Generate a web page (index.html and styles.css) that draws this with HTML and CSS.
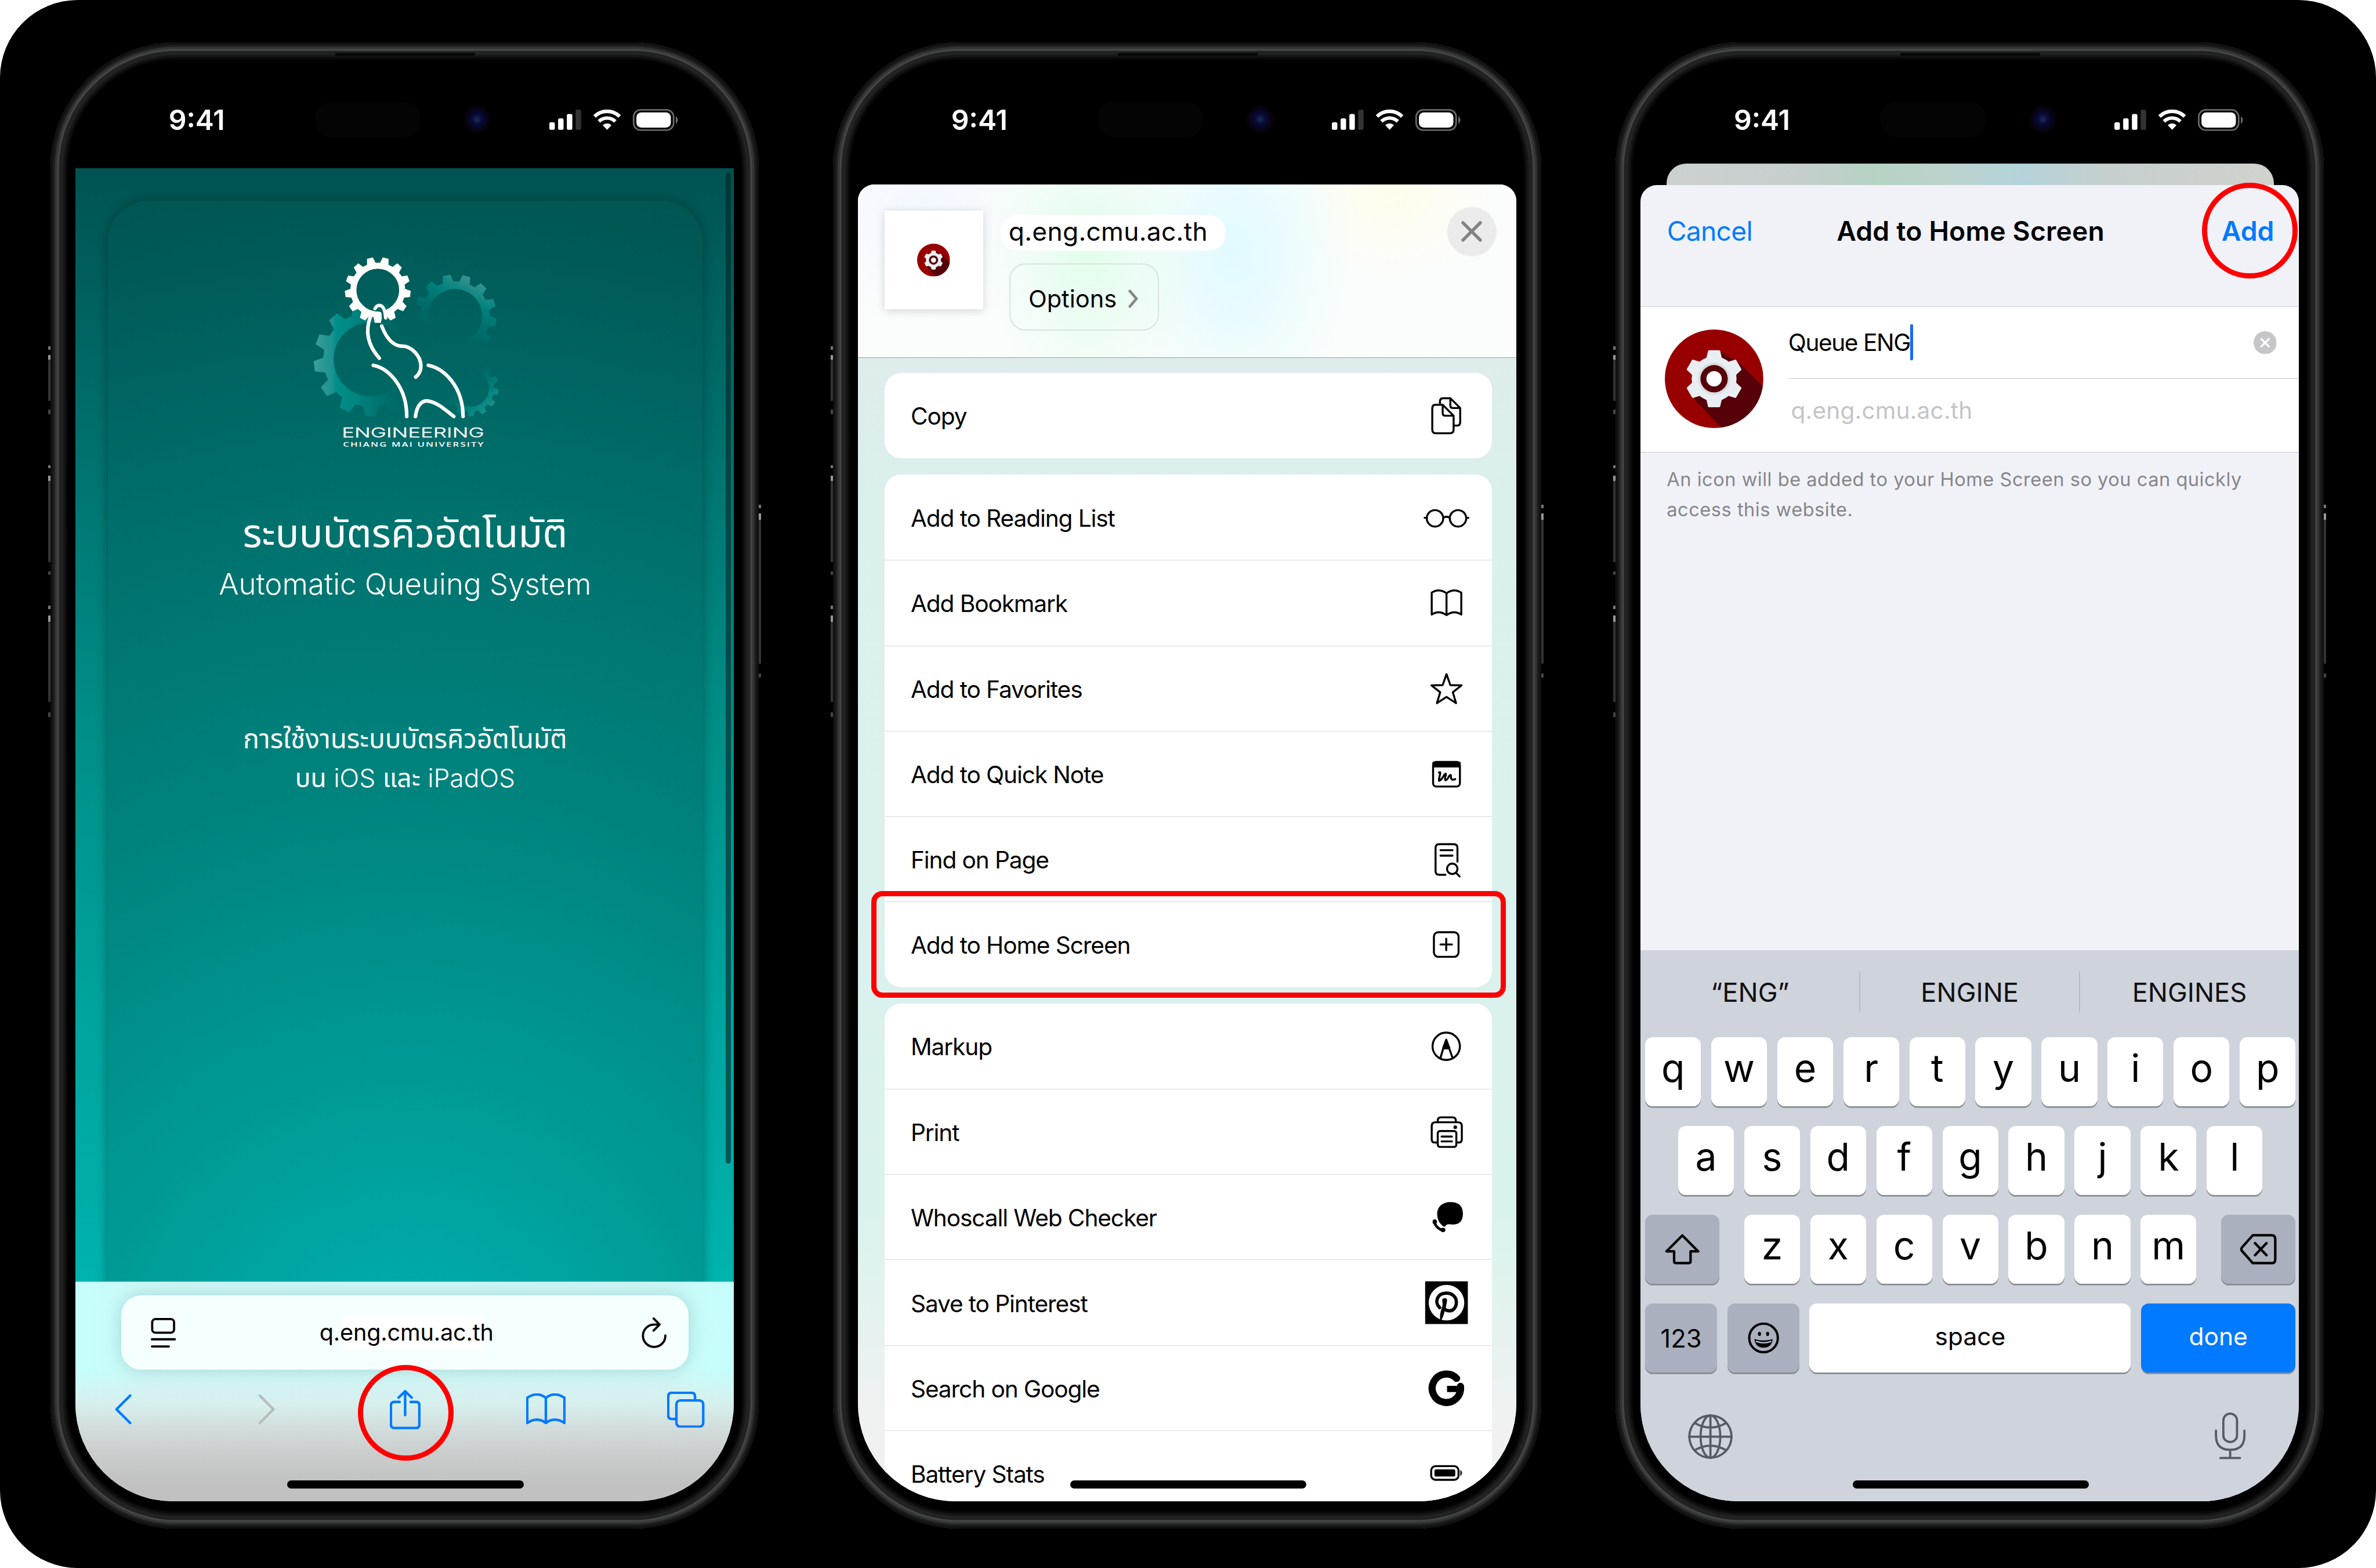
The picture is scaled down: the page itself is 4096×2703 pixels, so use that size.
FILE: index.html
```html
<!DOCTYPE html>
<html lang="th">
<head>
<meta charset="utf-8">
<title>Add to Home Screen on iOS</title>
<link rel="stylesheet" href="styles.css">
</head>
<body>
<svg class="defs" aria-hidden="true">
  <defs>
    <polygon id="tooth" points="-8.5,47 -5.5,60 5.5,60 8.5,47"/>
    <g id="gear">
      <circle r="44.5" fill="none" stroke="#fff" stroke-width="11"/>
      <g fill="#fff">
        <use href="#tooth"/>
        <use href="#tooth" transform="rotate(27.69)"/>
        <use href="#tooth" transform="rotate(55.38)"/>
        <use href="#tooth" transform="rotate(83.08)"/>
        <use href="#tooth" transform="rotate(110.77)"/>
        <use href="#tooth" transform="rotate(138.46)"/>
        <use href="#tooth" transform="rotate(166.15)"/>
        <use href="#tooth" transform="rotate(193.85)"/>
        <use href="#tooth" transform="rotate(221.54)"/>
        <use href="#tooth" transform="rotate(249.23)"/>
        <use href="#tooth" transform="rotate(276.92)"/>
        <use href="#tooth" transform="rotate(304.62)"/>
        <use href="#tooth" transform="rotate(332.31)"/>
      </g>
    </g>
    <symbol id="status-icons" viewBox="0 0 236 40">
      <g fill="#fff">
        <rect x="0" y="24" width="10" height="14" rx="3"/>
        <rect x="16" y="17" width="10" height="21" rx="3"/>
        <rect x="32" y="9" width="10" height="29" rx="3"/>
        <rect x="48" y="1" width="10" height="37" rx="3" fill="#333"/>
        <path d="M105.500 38 l-8 -8.500 a11.500 11.500 0 0 1 16 0z"/>
        <rect x="159" y="6" width="63" height="28" rx="9"/>
      </g>
      <g fill="none" stroke="#fff" stroke-width="6.500">
        <path d="M82.500 13.500a33 33 0 0 1 46 0"/>
        <path d="M90.500 22.500a21.500 21.500 0 0 1 30 0"/>
      </g>
      <rect x="154" y="1.500" width="73" height="37" rx="13" fill="none" stroke="#6a6a6a" stroke-width="3"/>
      <path d="M231 13.500c5 2.500 5 10.500 0 13z" fill="#6a6a6a"/>
    </symbol>
    <symbol id="emblem" viewBox="0 0 180 180">
      <clipPath id="disc"><circle cx="90" cy="90" r="90"/></clipPath>
      <g clip-path="url(#disc)">
        <rect width="180" height="180" fill="#980000"/>
        <path d="M102 40L139 64L182 107V182H106L53 127Z" fill="#560009"/>
      </g>
      <g fill="#e9eef2">
        <circle cx="90" cy="90" r="41"/>
        <g id="spokes">
          <path id="spoke" d="M75 56L79 39Q79.500 38 81 38H99Q100.500 38 101 39L105 56Z"/>
          <use href="#spoke" transform="rotate(60 90 90)"/>
          <use href="#spoke" transform="rotate(120 90 90)"/>
          <use href="#spoke" transform="rotate(180 90 90)"/>
          <use href="#spoke" transform="rotate(240 90 90)"/>
          <use href="#spoke" transform="rotate(300 90 90)"/>
        </g>
      </g>
      <circle cx="90" cy="90" r="29.500" fill="#d9dee1"/>
      <circle cx="90" cy="90" r="25" fill="#560009"/>
      <circle cx="90" cy="90" r="14" fill="#fff"/>
    </symbol>
  </defs>
</svg>

<main class="board">
  <!-- Step 1: open the share menu -->
  <section class="phone">
    <i class="earpiece"></i><i class="island"></i><i class="camera"></i>
    <div class="screen">
      <header class="status"><span class="time">9:41</span><svg class="status-icons"><use href="#status-icons"/></svg></header>
      <div class="page">
        <div class="page-card">
          <svg class="logo" viewBox="0 0 400 400">
            <defs>
              <linearGradient id="fade1" gradientUnits="userSpaceOnUse" x1="33" y1="0" x2="200" y2="0"><stop offset="0" stop-color="#3a9e9b"/><stop offset=".2" stop-color="#1c9390"/><stop offset=".24" stop-color="#008f8b"/><stop offset=".45" stop-color="#008a86" stop-opacity=".9"/><stop offset=".95" stop-color="#007a76" stop-opacity="0"/></linearGradient>
              <linearGradient id="fade2" gradientUnits="userSpaceOnUse" x1="325" y1="68" x2="265" y2="190"><stop offset="0" stop-color="#3a9490"/><stop offset=".3" stop-color="#00827e"/><stop offset=".9" stop-color="#006f6b" stop-opacity="0"/></linearGradient>
              <linearGradient id="fade3" gradientUnits="userSpaceOnUse" x1="362" y1="305" x2="305" y2="240"><stop offset="0" stop-color="#1d9490"/><stop offset=".3" stop-color="#04837f"/><stop offset=".9" stop-color="#00706c" stop-opacity="0"/></linearGradient>
              <mask id="m1"><use href="#gear" transform="translate(136.700 216.700) scale(1.730)"/></mask>
              <mask id="m2"><use href="#gear" transform="translate(291 137.300) scale(1.260) rotate(2)"/></mask>
              <mask id="m3"><use href="#gear" transform="translate(320 270) scale(.840)"/></mask>
            </defs>
            <rect width="400" height="400" fill="url(#fade1)" mask="url(#m1)"/>
            <rect width="400" height="400" fill="url(#fade2)" mask="url(#m2)"/>
            <rect width="400" height="400" fill="url(#fade3)" mask="url(#m3)"/>
            <use href="#gear" transform="translate(149.700 90)"/>
            <g fill="none" stroke-linecap="round">
              <path d="M143 126C149 128 157 125 159 132C160 137 158 141 161 147" stroke="#006360" stroke-width="5"/>
              <path d="M144.500 124C149 116 156 116 160.500 124C163.500 130 163 134 164 141" stroke="#fff" stroke-width="6"/>
              <g stroke="#fff" stroke-width="6.500">
                <path d="M136.500 138C128 160 128 187 152.500 214.500"/>
                <path d="M157 156C165 177 177 191 192 192.500C212 191 228.500 212 228.500 229C228.500 238 224 245 219 249"/>
                <path d="M141.500 227.500C170 233 203 268 202.500 321"/>
                <path d="M242 227.500C270 233 305 265 305.500 321"/>
                <path d="M218.500 321C221 300 231 289.500 245 293.500C260 297 272 308 288.500 321"/>
              </g>
            </g>
            <text class="logo-name" x="84" y="359.500" textLength="260" lengthAdjust="spacingAndGlyphs">ENGINEERING</text>
            <text class="logo-sub" x="86" y="376" textLength="259" lengthAdjust="spacingAndGlyphs">CHIANG MAI UNIVERSITY</text>
          </svg>
          <h1 class="title-th">ระบบบัตรคิวอัตโนมัติ</h1>
          <p class="title-en">Automatic Queuing System</p>
          <p class="howto-th">การใช้งานระบบบัตรคิวอัตโนมัติ</p>
          <p class="howto-os"><span>บน</span> iOS <span>และ</span> iPadOS</p>
        </div>
        <i class="scrollbar"></i>
      </div>
      <footer class="safari">
        <div class="urlbar">
          <svg class="i45" viewBox="0 0 46 56" fill="none" stroke="#000" stroke-width="4"><rect x="2.500" y="3" width="40" height="25" rx="6"/><path d="M2 40H44M2 53H33" stroke-linecap="round"/></svg>
          <span class="url">q.eng.cmu.ac.th</span>
          <svg class="i45" viewBox="0 0 46 56" fill="none" stroke="#000" stroke-width="4" stroke-linecap="round" stroke-linejoin="round"><path d="M22 2L33 13L22 24M33 13H22A20.500 20.500 0 1 0 43.500 33"/></svg>
        </div>
        <nav class="toolbar">
          <svg class="t-back" viewBox="0 0 32 56"><path d="M29 3L4 28L29 53"/></svg>
          <svg class="t-fwd" viewBox="0 0 32 56"><path d="M3 3L28 28L3 53"/></svg>
          <svg class="t-share" viewBox="0 0 56 72"><path d="M18 22H8Q2 22 2 28V63Q2 69.500 8 69.500H48Q54 69.500 54 63V28Q54 22 48 22H38M28 46V3M16 14L28 2.500L40 14"/></svg>
          <svg class="t-book" viewBox="0 0 72 58"><path d="M36 8Q20 -4 2 8V54Q20 42 36 54Q52 42 70 54V8Q52 -4 36 8ZM36 8V54"/></svg>
          <svg class="t-tabs" viewBox="0 0 68 66"><rect x="17" y="16" width="49" height="48" rx="7"/><path d="M17 50H9Q2 50 2 43V9Q2 2 9 2H44Q51 2 51 9V16"/></svg>
        </nav>
      </footer>
    </div>
    <i class="ring ring-share"></i><i class="home"></i>
  </section>

  <!-- Step 2: choose Add to Home Screen -->
  <section class="phone">
    <i class="earpiece"></i><i class="island"></i><i class="camera"></i>
    <div class="screen">
      <header class="status"><span class="time">9:41</span><svg class="status-icons"><use href="#status-icons"/></svg></header>
      <div class="share">
        <div class="share-head">
          <div class="thumb"><svg viewBox="0 0 180 180"><use href="#emblem"/></svg></div>
          <div class="share-info">
            <span class="share-url">q.eng.cmu.ac.th</span>
            <span class="options">Options<svg viewBox="0 0 20 34"><path d="M4 3L16 17L4 31"/></svg></span>
          </div>
          <span class="close"><svg viewBox="0 0 36 36"><path d="M3 3L33 33M33 3L3 33"/></svg></span>
        </div>
        <div class="share-list">
          <ul class="card">
            <li>Copy<svg viewBox="0 0 84 84"><path d="M30 19V16Q30 10 36 10H49L67 28V54Q67 60 61 60H56M49 11V23Q49 28 54 28H66"/><path d="M16 29Q16 22 22 22H35L55 42V67Q55 74 49 74H22Q16 74 16 67ZM35 23V37Q35 42 40 42H54"/></svg></li>
          </ul>
          <ul class="card">
            <li>Add to Reading List<svg viewBox="0 0 84 84"><circle cx="21" cy="43" r="15"/><circle cx="63" cy="43" r="15"/><path d="M36 42Q42 38 48 42M2 42H6M78 42H82"/></svg></li>
            <li>Add Bookmark<svg viewBox="0 0 84 84"><path d="M42 24Q28 14 15 23V63Q28 54 42 64Q56 54 69 63V23Q56 14 42 24ZM42 24V64"/></svg></li>
            <li>Add to Favorites<svg viewBox="0 0 84 84"><path d="M42 15L49 35L69.500 35.500L53.500 48L59.500 68L42 56.500L24.500 68L30.500 48L14.500 35.500L35 35Z"/></svg></li>
            <li>Add to Quick Note<svg viewBox="0 0 84 84"><rect x="17.500" y="19.500" width="49" height="45" rx="6"/><path d="M18 21H66V28H18Z" fill="#000"/><path d="M28 39Q32 37 30 43Q27 55 29 54Q33 52 38 43Q41 39 41 43Q38 52 40 53Q43 53 47 45Q51 41 50 48Q51 54 58 51"/></svg></li>
            <li>Find on Page<svg viewBox="0 0 84 84"><path d="M40 70H29Q22 70 22 63V21Q22 14 29 14H55Q62 14 62 21V46M31 25H53M31 35H53"/><circle cx="52.500" cy="59" r="9.500"/><path d="M59 66L66 73"/></svg></li>
            <li>Add to Home Screen<svg viewBox="0 0 84 84"><rect x="19" y="19" width="45" height="45" rx="8"/><path d="M41.500 31V52M31 41.500H52"/></svg></li>
          </ul>
          <ul class="card">
            <li>Markup<svg viewBox="0 0 84 84"><circle cx="41.500" cy="42" r="25"/><path d="M31 63L36 46L41.500 31L47 46L53 63M36 46H47"/><path d="M41.500 30L47 45H36Z" fill="#000"/></svg></li>
            <li>Print<svg viewBox="0 0 84 84"><path d="M26 24V21Q26 15 32 15H53Q59 15 59 21V24"/><path d="M25 61H21Q15 61 15 55V31Q15 24 22 24H63Q70 24 70 31V55Q70 61 64 61H60"/><rect x="26" y="40" width="34" height="29" rx="4"/><path d="M33 50H52M33 59H52"/><circle cx="58" cy="33" r="1.500" fill="#000"/></svg></li>
            <li>Whoscall Web Checker<svg viewBox="19 2 84 84" class="solid"><path d="M68 16C84 16 91 24 91 37C91 51 84 57 73 57C68 57 65 56 62 57C59 58 60 61 57 61C50 58 44 49 44 38C44 24 54 16 68 16Z"/><path d="M39 53C41 60 47 66 54 67.500" fill="none" stroke="#000" stroke-width="5"/><ellipse cx="39.500" cy="52" rx="4" ry="4.500"/><ellipse cx="54.500" cy="67" rx="4.500" ry="4"/></svg></li>
            <li>Save to Pinterest<svg viewBox="-3 -3 84 84" class="solid"><rect width="78" height="78"/><circle cx="39" cy="39" r="32.500" fill="#fff"/><path d="M26.500 48C16 38 22 21.500 39 21.500C50 21.500 57 29 57 38C57 48 51 54 44 54C40 54 38 53 35 50" fill="none" stroke="#000" stroke-width="6"/><path d="M31 35C31 29.500 41 29 40 35.500C39 42 37 52 35 57C34 62 32 66 30 70L27.500 70C26.500 62 28 56 30 50C32 44 32.500 42 31 35Z"/></svg></li>
            <li>Search on Google<svg viewBox="-10 -10 84 84" class="solid"><path d="M50.500 13.500A26 26 0 1 0 57.500 28" fill="none" stroke="#000" stroke-width="13"/><path d="M33 27H64V32L58 38.500H33Z"/></svg></li>
            <li>Battery Stats<svg viewBox="0 0 84 84"><rect x="14" y="28" width="50" height="25" rx="8"/><rect x="20" y="34" width="38" height="13" rx="3" fill="#000" stroke="none"/><path d="M68 36Q72 40 68 45Z" fill="#000" stroke-width="1"/></svg></li>
          </ul>
        </div>
      </div>
    </div>
    <i class="highlight"></i><i class="home"></i>
  </section>

  <!-- Step 3: confirm with Add -->
  <section class="phone">
    <i class="earpiece"></i><i class="island"></i><i class="camera"></i>
    <div class="screen">
      <header class="status"><span class="time">9:41</span><svg class="status-icons"><use href="#status-icons"/></svg></header>
      <div class="behind"></div>
      <div class="add">
        <div class="add-head"><span class="cancel">Cancel</span><b>Add to Home Screen</b><span class="confirm">Add</span></div>
        <div class="form">
          <svg class="app-icon" viewBox="0 0 180 180"><use href="#emblem"/></svg>
          <div class="fields">
            <div class="field name"><span>Queue ENG</span><i class="caret"></i><svg viewBox="0 0 42 42"><circle cx="21" cy="21" r="21" fill="#c6c6c8"/><path d="M14 14L28 28M28 14L14 28" stroke="#fff" stroke-width="3.500" stroke-linecap="round"/></svg></div>
            <div class="field link">q.eng.cmu.ac.th</div>
          </div>
        </div>
        <p class="hint">An icon will be added to your Home Screen so you can quickly<br>access this website.</p>
        <div class="keyboard">
          <div class="suggest"><span>“ENG”</span><span>ENGINE</span><span>ENGINES</span></div>
          <div class="keys"><kbd>q</kbd><kbd>w</kbd><kbd>e</kbd><kbd>r</kbd><kbd>t</kbd><kbd>y</kbd><kbd>u</kbd><kbd>i</kbd><kbd>o</kbd><kbd>p</kbd></div>
          <div class="keys"><kbd>a</kbd><kbd>s</kbd><kbd>d</kbd><kbd>f</kbd><kbd>g</kbd><kbd>h</kbd><kbd>j</kbd><kbd>k</kbd><kbd>l</kbd></div>
          <div class="keys spread">
            <kbd class="fn shift"><svg viewBox="0 0 64 56"><path d="M32 3L61 32H47V50Q47 53.500 43 53.500H21Q17 53.500 17 50V32H3Z"/></svg></kbd>
            <div class="keys"><kbd>z</kbd><kbd>x</kbd><kbd>c</kbd><kbd>v</kbd><kbd>b</kbd><kbd>n</kbd><kbd>m</kbd></div>
            <kbd class="fn shift"><svg viewBox="0 0 68 56"><path d="M24 2.500H58Q65 2.500 65 9.500V46.500Q65 53.500 58 53.500H24L4 31Q2 28 4 25ZM28 17L49 39M49 17L28 39"/></svg></kbd>
          </div>
          <div class="keys bottom">
            <kbd class="fn mode">123</kbd>
            <kbd class="fn mode"><svg viewBox="0 0 64 60"><circle cx="32" cy="30" r="28"/><ellipse cx="24" cy="22" rx="3" ry="4" fill="#000" stroke="none"/><ellipse cx="40" cy="22" rx="3" ry="4" fill="#000" stroke="none"/><path d="M14 32Q32 38 50 32Q48 49 32 49Q16 49 14 32Z" fill="#000" stroke="none"/><path d="M18 37Q32 42 46 37" stroke="#aab0be" stroke-width="3"/></svg></kbd>
            <kbd class="space">space</kbd>
            <kbd class="done">done</kbd>
          </div>
          <div class="dock">
            <svg viewBox="0 0 84 88"><circle cx="42" cy="44" r="38.500"/><ellipse cx="42" cy="44" rx="18" ry="38.500"/><path d="M42 5V83M3 44H81M13 19Q42 36 71 19M13 69Q42 52 71 69"/></svg>
            <svg viewBox="0 0 84 88"><rect x="29.500" y="2" width="25" height="52" rx="12.500"/><path d="M16 33V42Q16 68 42 68Q68 68 68 42V33M42 68V83M24 83H60"/></svg>
          </div>
        </div>
      </div>
    </div>
    <i class="ring ring-add"></i><i class="home"></i>
  </section>
</main>
</body>
</html>
```
FILE: styles.css
```css
/* 1rem = 100 design units; the design is 4340 units wide */
html { font-size: 94.3779px; }
* { box-sizing: border-box; margin: 0; padding: 0; }
body { background: #fff; font-family: Inter, "Noto Sans Thai", "Noto Sans", sans-serif; color: #000; }
ul { list-style: none; }
svg { display: block; flex: none; }
.defs { position: absolute; width: 0; height: 0; }

.board { display: flex; gap: 1.345rem; width: 43.4rem; height: 28.64rem; padding: .77rem 0 0 .92rem; background: #000; border-radius: 1.42rem; overflow: hidden; }

/* device */
.phone { position: relative; flex: none; width: 12.94rem; margin-right: .01rem; height: 27.15rem; padding: .5rem .46rem; border-radius: 2.3rem; background: #000;
  box-shadow: inset 0 0 0 .04rem #111, inset 0 0 0 .08rem #1d1d1d, inset 0 0 0 .12rem #333534, inset 0 0 0 .155rem #434645, inset 0 0 0 .23rem #222, inset 0 0 0 .27rem #161616, inset 0 0 0 .31rem #0a0a0a; }
.phone::before, .phone::after { content: ""; position: absolute; width: .04rem; }
.phone::before { left: -.04rem; top: 5.56rem; height: 6.8rem;
  background: linear-gradient(#777 .06rem, #000 .06rem .16rem, #999 .16rem .24rem, #333 .24rem 1rem, #000 1rem 1.16rem, #444 1.16rem 1.24rem, #000 1.24rem 2.17rem, #777 2.17rem 2.23rem, #000 2.23rem 2.36rem, #999 2.36rem 2.46rem, #333 2.46rem 3.94rem, #000 3.94rem 4.11rem, #444 4.11rem 4.18rem, #000 4.18rem 4.74rem, #777 4.74rem 4.8rem, #000 4.8rem 4.92rem, #999 4.92rem 5.03rem, #333 5.03rem 6.5rem, #000 6.5rem 6.69rem, #444 6.69rem 6.77rem, #000 6.77rem); }
.phone::after { right: -.04rem; top: 8.45rem; height: 3.2rem;
  background: linear-gradient(#777 .06rem, #000 .06rem .16rem, #999 .16rem .28rem, #333 .28rem 2.9rem, #000 2.9rem 3.08rem, #444 3.08rem 3.16rem, #000 3.16rem); }
.screen { display: flex; flex-direction: column; height: 26.15rem; border-radius: 1.78rem; overflow: hidden; background: #000; }
.earpiece { position: absolute; left: 5.2rem; top: .19rem; width: 2.56rem; height: .07rem; border-radius: 0 0 .04rem .04rem; background: #080808; }
.island { position: absolute; z-index: 1; left: 4.83rem; top: 1.08rem; width: 1.93rem; height: .66rem; border-radius: .3rem; background: #040404; }
.camera { position: absolute; z-index: 1; left: 7.53rem; top: 1.14rem; width: .54rem; height: .54rem; border-radius: 50%; background: radial-gradient(#102a4a 6%, #0b0b3c 22%, #05051c 45%, #070208 60%, #000 72%); }
.home { position: absolute; left: 4.33rem; top: 26.27rem; width: 4.32rem; height: .15rem; border-radius: .08rem; background: #000; }
.status { flex: none; height: 1.8rem; padding: .04rem 1.01rem 0 1.7rem; display: flex; align-items: center; justify-content: space-between; color: #fff; }
.time { font-size: .51rem; font-weight: 600; }
.status-icons { width: 2.36rem; height: .4rem; }

/* annotations */
.ring { position: absolute; width: 1.75rem; height: 1.75rem; border: .1rem solid #f00; border-radius: 50%; }
.ring-share { left: 5.62rem; top: 24.16rem; }
.ring-add { left: 10.71rem; top: 2.57rem; }
.highlight { position: absolute; left: .7rem; top: 15.51rem; width: 11.59rem; height: 1.95rem; border: .1rem solid #f00; border-radius: .2rem; }

/* step 1: web page */
.page { position: relative; flex: none; height: 20.34rem; padding: .6rem .57rem 0 .59rem; overflow: hidden; background: linear-gradient(#005351, #006461 14%, #007672 29%, #008f88 51%, #00a39d 75%, #00b3ad); }
.page-card { height: 21.5rem; border-radius: .75rem; display: flex; flex-direction: column; align-items: center; color: #fff; box-shadow: 0 0 .2rem rgba(0,30,30,.45);
  background: radial-gradient(circle 23rem at 50% 21.84rem, #00aeab 4%, #00a9a6 10.4%, #009f9b 20.6%, #009591 30.7%, #00847e 47.6%, #00706c 71.8%, #005754 95%, #005451); }
.logo { width: 4rem; height: 4rem; margin-top: .73rem; }
.logo-name { font: 300 24.500px Inter, sans-serif; fill: #fff; stroke: #fff; stroke-width: .4px; }
.logo-sub { font: 600 10.500px "Open Sans", sans-serif; letter-spacing: 1.300px; fill: #fff; }
.title-th { margin-top: .82rem; font-size: .72rem; font-weight: 400; line-height: 1.02rem; }
.title-en { margin-top: .08rem; font-size: .54rem; font-weight: 300; line-height: .7rem; }
.howto-th { margin-top: 2.12rem; font-size: .488rem; line-height: .7rem; }
.howto-os { margin-top: .02rem; font-size: .47rem; font-weight: 300; line-height: .7rem; }
.howto-os span { font-weight: 400; }
.scrollbar { position: absolute; right: .05rem; top: .08rem; width: .1rem; height: 18.1rem; border-radius: .05rem; background: rgba(0,38,38,.62); }
.safari { flex: 1; padding: .24rem .82rem 0 .84rem; background: linear-gradient(transparent 40%, #d7efed 56%, #d2dedd 66%, #cbcdcd 78%, #c1c1c1 92%), linear-gradient(90deg, #c4fffc, #cdf7f6 12%, #cdf7f6 88%, #c4fffc); border-top: .01rem solid #7fcfca; }
.urlbar { display: flex; align-items: center; justify-content: space-between; height: 1.36rem; padding: 0 .4rem 0 .53rem; border-radius: .36rem; background: #f6ffff; box-shadow: 0 0 .3rem rgba(0,90,90,.2); }
.url { margin-left: -.08rem; font-size: .42rem; letter-spacing: -.002rem; background: linear-gradient(#fff, #fff) .42rem 0 / 2.6rem 100% no-repeat; line-height: .65rem; }
.i45 { width: .46rem; height: .56rem; }
.toolbar { display: flex; align-items: center; height: .75rem; margin: .35rem -.5rem 0 -.13rem; fill: none; stroke: #007aff; stroke-width: 4.600; }
.toolbar path { stroke-linecap: round; stroke-linejoin: round; }
.t-back, .t-fwd { width: .32rem; height: .56rem; }
.t-fwd { stroke: #b4bebd; margin-left: 2.31rem; }
.t-share { width: .56rem; height: .72rem; margin-left: 2.08rem; }
.t-book { width: .72rem; height: .58rem; margin-left: 1.93rem; }
.t-tabs { width: .68rem; height: .66rem; margin-left: 1.86rem; }

/* step 2: share sheet */
.share { flex: 1; margin-top: .3rem; border-radius: .3rem .3rem 0 0; overflow: hidden; background: #dceeed; }
.share-head { display: flex; height: 3.17rem; padding: .48rem .36rem 0 .48rem; border-bottom: .02rem solid #98a09f;
  background: radial-gradient(ellipse 1.9rem 2.9rem at 35% 42%, #e2fdec, transparent), radial-gradient(ellipse 2.2rem 3.2rem at 57% 40%, #e0fafe, transparent), radial-gradient(ellipse 1.9rem 1.6rem at 81% 5%, #fefdec, transparent), radial-gradient(ellipse 2.2rem 2rem at 10% 20%, #f2f7ff, transparent), #fbfdfc; }
.thumb { width: 1.8rem; height: 1.8rem; display: flex; align-items: center; justify-content: center; background: #fff; border-radius: .03rem; box-shadow: 0 .03rem .16rem rgba(0,0,0,.15); }
.thumb svg { width: .6rem; height: .6rem; }
.share-info { flex: 1; margin-left: .32rem; display: flex; flex-direction: column; align-items: flex-start; }
.share-url { margin-top: .08rem; width: 4.11rem; height: .65rem; padding-left: .15rem; border-radius: .3rem; background: #fff; font-size: .47rem; letter-spacing: .003rem; line-height: .6rem; }
.options { display: flex; align-items: center; gap: .2rem; margin: .23rem 0 0 .16rem; width: 2.74rem; height: 1.23rem; padding: .07rem 0 0 .33rem; border: .025rem solid #d9e3df; border-radius: .3rem; font-size: .44rem; }
.options svg { width: .2rem; height: .34rem; fill: none; stroke: #86888b; stroke-width: 5; stroke-linecap: round; stroke-linejoin: round; }
.close { display: flex; align-items: center; justify-content: center; width: .9rem; height: .9rem; margin-top: -.07rem; border-radius: 50%; background: #ebebeb; }
.close svg { width: .38rem; stroke: #828287; stroke-width: 5.500; stroke-linecap: round; }
.share-list { display: flex; flex-direction: column; gap: .3rem; padding: .27rem .44rem 0 .48rem; background: linear-gradient(#dfecec, #daf0ed 12%, #daf2ee 75%, #eef2f1 92%, #f1f1f1); height: 20.88rem; }
.card { border-radius: .3rem; background: #fff; flex: none; }
.card li { display: flex; align-items: center; justify-content: space-between; height: 1.56rem; padding: .03rem .41rem 0 .48rem; font-size: .43rem; letter-spacing: -.0115rem; }
.card li + li { border-top: .02rem solid #d8d8d9; }
.card svg { width: .84rem; height: .84rem; margin-top: -.02rem; fill: none; stroke: #000; stroke-width: 3.600; stroke-linecap: round; stroke-linejoin: round; }
.card svg.solid { fill: #000; stroke: none; }

/* step 3: add dialog */
.behind { flex: none; height: .39rem; margin: -.08rem .46rem 0 .47rem; border-radius: .36rem .36rem 0 0; background: linear-gradient(90deg, #ccd0d0, #c6cecd 22%, #b6d3c2 34%, #bcd3cd 46%, #b4d3da 58%, #c5cfce 72%, #d0d2cd); }
.add { flex: 1; display: flex; flex-direction: column; background: #f1f2f8; border-radius: .3rem .3rem 0 0; overflow: hidden; }
.add-head { display: flex; height: 2.21rem; padding: .48rem .45rem 0 .48rem; font-size: .49rem; line-height: .74rem; }
.add-head b { font-weight: 600; letter-spacing: .002rem; }
.cancel, .confirm { flex: 1; color: #007aff; }
.cancel { letter-spacing: -.008rem; }
.confirm { font-weight: 600; text-align: right; }
.form { display: flex; height: 2.68rem; background: #fff; border: solid #c9c9cd; border-width: .02rem 0; padding: .42rem 0 0 .445rem; }
.app-icon { width: 1.8rem; height: 1.8rem; }
.fields { flex: 1; margin: -.42rem 0 0 .45rem; }
.field { display: flex; align-items: center; height: 1.32rem; font-size: .43rem; }
.name { border-bottom: .02rem solid #c9c9cb; padding-right: .41rem; }
.name span { flex: none; letter-spacing: -.015rem; }
.caret { width: .05rem; height: .66rem; border-radius: .02rem; background: #1a66f5; margin-right: auto; }
.name svg { width: .42rem; height: .42rem; }
.link { padding: 0 0 .17rem .05rem; color: #c4c4c7; letter-spacing: .002rem; }
.hint { flex: 1; padding: .22rem .475rem; font-size: .345rem; line-height: .55rem; color: #86868b; letter-spacing: .0055rem; white-space: nowrap; }
.keyboard { flex: none; height: 10.06rem; background: #cfd3dc; padding: 0 .06rem 0 .08rem; }
.suggest { display: flex; height: 1.59rem; padding-top: .39rem; margin: 0 -.06rem 0 -.08rem; font-size: .48rem; line-height: .76rem; color: #111; }
.suggest span { flex: 1; height: .74rem; text-align: center; }
.suggest span + span { border-left: .03rem solid #b6bbc5; }
.keys { display: flex; justify-content: center; gap: .187rem; margin-bottom: .36rem; }
.keys .keys { margin: 0; }
.spread { justify-content: space-between; }
kbd { display: flex; align-items: center; justify-content: center; width: 1.02rem; height: 1.26rem; padding-bottom: .15rem; border-radius: .14rem; background: #fff; box-shadow: 0 .03rem 0 #888b92; font: 400 .7rem Inter, sans-serif; }
.fn { background: #aab0be; padding: 0; font-size: .46rem; }
.shift { width: 1.36rem; }
.mode { width: 1.315rem; }
.fn svg { height: .56rem; fill: none; stroke: #000; stroke-width: 4.500; stroke-linejoin: round; stroke-linecap: round; }
.space, .done { padding-bottom: .06rem; font-size: .45rem; }
.space { flex: 1; }
.done { width: 2.82rem; background: #007aff; color: #fff; }
.dock { display: flex; justify-content: space-between; padding: .37rem .77rem 0; fill: none; stroke: #555a64; stroke-width: 4; stroke-linecap: round; }
.dock svg { width: .84rem; height: .88rem; }
```
